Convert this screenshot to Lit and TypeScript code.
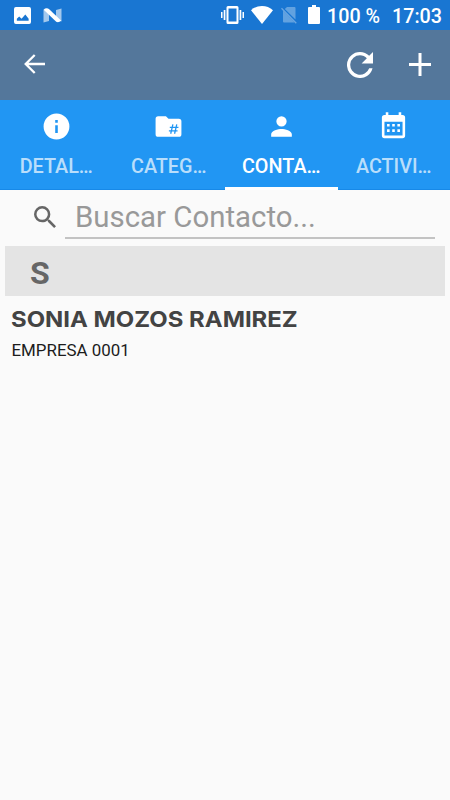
import { LitElement, html, css, svg } from "lit";
import { customElement, property } from "lit/decorators.js";
import { classMap } from "lit/directives/class-map.js";

const info = svg`<path fill-rule="evenodd" d="M12 2a10 10 0 1 0 0 20 10 10 0 0 0 0-20zm1 15h-2v-6h2v6zm0-8h-2V7h2v2z"/>`;
const folder = svg`<path d="M10 4H4a2 2 0 0 0-2 2v12a2 2 0 0 0 2 2h16a2 2 0 0 0 2-2V8a2 2 0 0 0-2-2h-8z"/><path d="M15.400 10.400l-1.700 7.200M18.400 10.400l-1.700 7.200M13 12.600h6.700M12.300 15.400h6.700" fill="none" stroke="#2196f3" stroke-width="1"/>`;
const person = svg`<path d="M12 12a4 4 0 1 0 0-8 4 4 0 0 0 0 8zm0 2c-2.670 0-8 1.340-8 4v2h16v-2c0-2.660-5.330-4-8-4z"/>`;
const calendar = svg`<path fill-rule="evenodd" d="M6 1h2v2h8V1h2v2h1a2 2 0 0 1 2 2v14a2 2 0 0 1-2 2H5a2 2 0 0 1-2-2V5a2 2 0 0 1 2-2h1zM5 8.300v10.700h14V8.300z"/><path d="M7 10h2v2H7zM11 10h2v2h-2zM15 10h2v2h-2zM7 14.200h2v2H7zM11 14.200h2v2h-2zM15 14.200h2v2h-2z"/>`;

@customElement("status-bar")
export class StatusBar extends LitElement {
  static styles = css`
    :host { display: flex; align-items: center; height: 30px; background: #1976d2; color: #fff; box-sizing: border-box; padding: 0 8px 0 14px; font: 500 19.700px/30px Roboto, sans-serif; }
    svg { display: block; fill: #fff; flex: none; }
    .fill { flex: 1; }
    .n { margin-left: 12px; }
    .wifi { margin-left: 7px; }
    .sim { margin-left: 8px; }
    .batt { margin-left: 11px; margin-right: 7px; margin-bottom: 1px; }
    .text { padding-top: 3px; white-space: pre; }
    .pct { width: 65px; }
  `;
  render() {
    return html`
      <svg width="17" height="17" viewBox="3 3 18 18"><path fill-rule="evenodd" d="M21 19V5a2 2 0 0 0-2-2H5a2 2 0 0 0-2 2v14a2 2 0 0 0 2 2h14a2 2 0 0 0 2-2zM6 17.500v-2l2.500-2.500 2.500 2.500 4-4.500 3.500 4.500v2z"/></svg>
      <svg class="n" width="19" height="15" viewBox="0 0 19 15"><path opacity=".6" d="M.5 1.500L6 4v9L.5 14.500zM13 2l5.500-1.500v13L13 11z"/><path d="M2 .6Q4.500-.3 6.200 1.300L18.300 12.800Q15.500 15 13.200 13.800L.7 1.800z"/></svg>
      <span class="fill"></span>
      <svg width="23" height="18" viewBox="0 0 23 18"><path fill-rule="evenodd" d="M7 0h9a1.500 1.500 0 0 1 1.500 1.500v15A1.500 1.500 0 0 1 16 18H7a1.500 1.500 0 0 1-1.500-1.500v-15A1.500 1.500 0 0 1 7 0zm.5 2.500v13h8v-13zM0 6h1.500v6H0zM2.700 4h1.700v10H2.700zM18.600 4h1.700v10h-1.700zM21.500 6H23v6h-1.500z"/></svg>
      <svg class="wifi" width="22" height="18" viewBox="0 0 22 18"><path d="M11 18 0 4.200C3 1.500 6.800 0 11 0s8 1.500 11 4.200z"/></svg>
      <svg class="sim" width="16" height="18" viewBox="0 0 16 18"><path opacity=".32" d="M6 1h7.500a1 1 0 0 1 1 1v11.600L3.800 2.900zM2 4.800 13.500 16.500H3a1 1 0 0 1-1-1z"/><path d="M.5 2.200 15.300 17.200" stroke="#fff" stroke-width="1.300" opacity=".35"/></svg>
      <svg class="batt" width="12" height="19" viewBox="0 0 12 19"><path d="M4 0h4v2h3a1 1 0 0 1 1 1v15a1 1 0 0 1-1 1H1a1 1 0 0 1-1-1V3a1 1 0 0 1 1-1h3z"/></svg>
      <span class="text pct">100 %</span><span class="text">17:03</span>
    `;
  }
}

@customElement("tool-bar")
export class ToolBar extends LitElement {
  static styles = css`
    :host { display: flex; align-items: center; height: 70px; background: #54779b; box-sizing: border-box; padding: 0 19px 0 24px; }
    svg { display: block; fill: #fff; }
    .refresh { margin-left: auto; margin-right: 36px; margin-bottom: 1px; }
    .back { margin-bottom: 2px; }
    .add { margin-bottom: 1px; }
  `;
  render() {
    return html`
      <svg class="back" width="21" height="20" viewBox="0 0 21 20"><path d="M10.700 1 1.700 10l9 9M2 10h19" fill="none" stroke="#fff" stroke-width="2.300"/></svg>
      <svg class="refresh" width="26" height="26" viewBox="4 4 16 16"><path d="M17.650 6.350A7.960 7.960 0 0 0 12 4a8 8 0 1 0 7.730 10h-2.080A6 6 0 1 1 12 6c1.660 0 3.140.69 4.220 1.780L13 11h7V4z"/></svg>
      <svg class="add" width="22" height="23" viewBox="0 0 22 23"><path d="M9.500 0h3v10h9.500v3h-9.500v10h-3v-10H0v-3h9.500z"/></svg>
    `;
  }
}

@customElement("tab-strip")
export class TabStrip extends LitElement {
  @property({ type: Number }) selected = 2;
  static styles = css`
    :host { display: grid; grid-template-columns: repeat(4, 1fr); height: 90px; background: #2196f3; box-shadow: inset 0 -1px #1789e8; }
    .tab { display: flex; flex-direction: column; align-items: center; box-sizing: border-box; padding-top: 11px; border-bottom: 3px solid transparent; color: rgba(255, 255, 255, 0.7); font: 500 19.800px/24px Roboto, sans-serif; }
    .active { color: #fff; border-color: #fff; }
    svg { display: block; fill: #fff; margin-bottom: 13px; }
  `;
  render() {
    const tabs = [
      { label: "DETAL…", icon: info },
      { label: "CATEG…", icon: folder },
      { label: "CONTA…", icon: person },
      { label: "ACTIVI…", icon: calendar },
    ];
    return html`${tabs.map(
      (t, i) => html`<div class=${classMap({ tab: true, active: i === this.selected })}>
        <svg width="31" height="31" viewBox="0 0 24 24">${t.icon}</svg>
        <span>${t.label}</span>
      </div>`
    )}`;
  }
}

@customElement("app-root")
export class AppRoot extends LitElement {
  static styles = css`
    :host { display: block; height: 800px; background: #fafafa; font-family: Roboto, sans-serif; overflow: hidden; }
    .search { display: flex; align-items: flex-start; height: 56px; padding: 0 15px 0 33.500px; box-sizing: border-box; }
    .search svg { margin: 15.500px 9.500px 0 0; fill: #666; flex: none; }
    .field { flex: 1; height: 49px; box-sizing: border-box; border-bottom: 2px solid #c3c3c3; padding: 10px 0 0 10px; font-size: 29.400px; line-height: 34px; color: #999; }
    .section { height: 50px; margin: 0 5px; padding: 3px 0 0 25px; box-sizing: border-box; background: #e4e4e4; color: #666; font-weight: 700; font-size: 32px; line-height: 48px; }
    .contact { padding: 9px 11px; }
    .name { font: 700 22px/28px Inter, sans-serif; color: #434343; white-space: nowrap; transform: scaleX(1.087); transform-origin: left; }
    .company { margin-top: 7px; padding-left: 0.500px; font-size: 16.900px; line-height: 20px; color: #1c1c1c; }
  `;
  render() {
    return html`
      <status-bar></status-bar>
      <tool-bar></tool-bar>
      <tab-strip></tab-strip>
      <div class="search">
        <svg width="22" height="22" viewBox="3 3 17.490 17.490"><path fill-rule="evenodd" d="M15.500 14h-.79l-.28-.27A6.470 6.470 0 0 0 16 9.500 6.500 6.500 0 1 0 9.500 16c1.610 0 3.090-.59 4.230-1.570l.27.28v.79l5 4.990L20.490 19zm-6 0a4.500 4.500 0 1 1 0-9 4.500 4.500 0 0 1 0 9z"/></svg>
        <div class="field">Buscar Contacto...</div>
      </div>
      <div class="section">S</div>
      <div class="contact">
        <div class="name">SONIA MOZOS RAMIREZ</div>
        <div class="company">EMPRESA 0001</div>
      </div>
    `;
  }
}
